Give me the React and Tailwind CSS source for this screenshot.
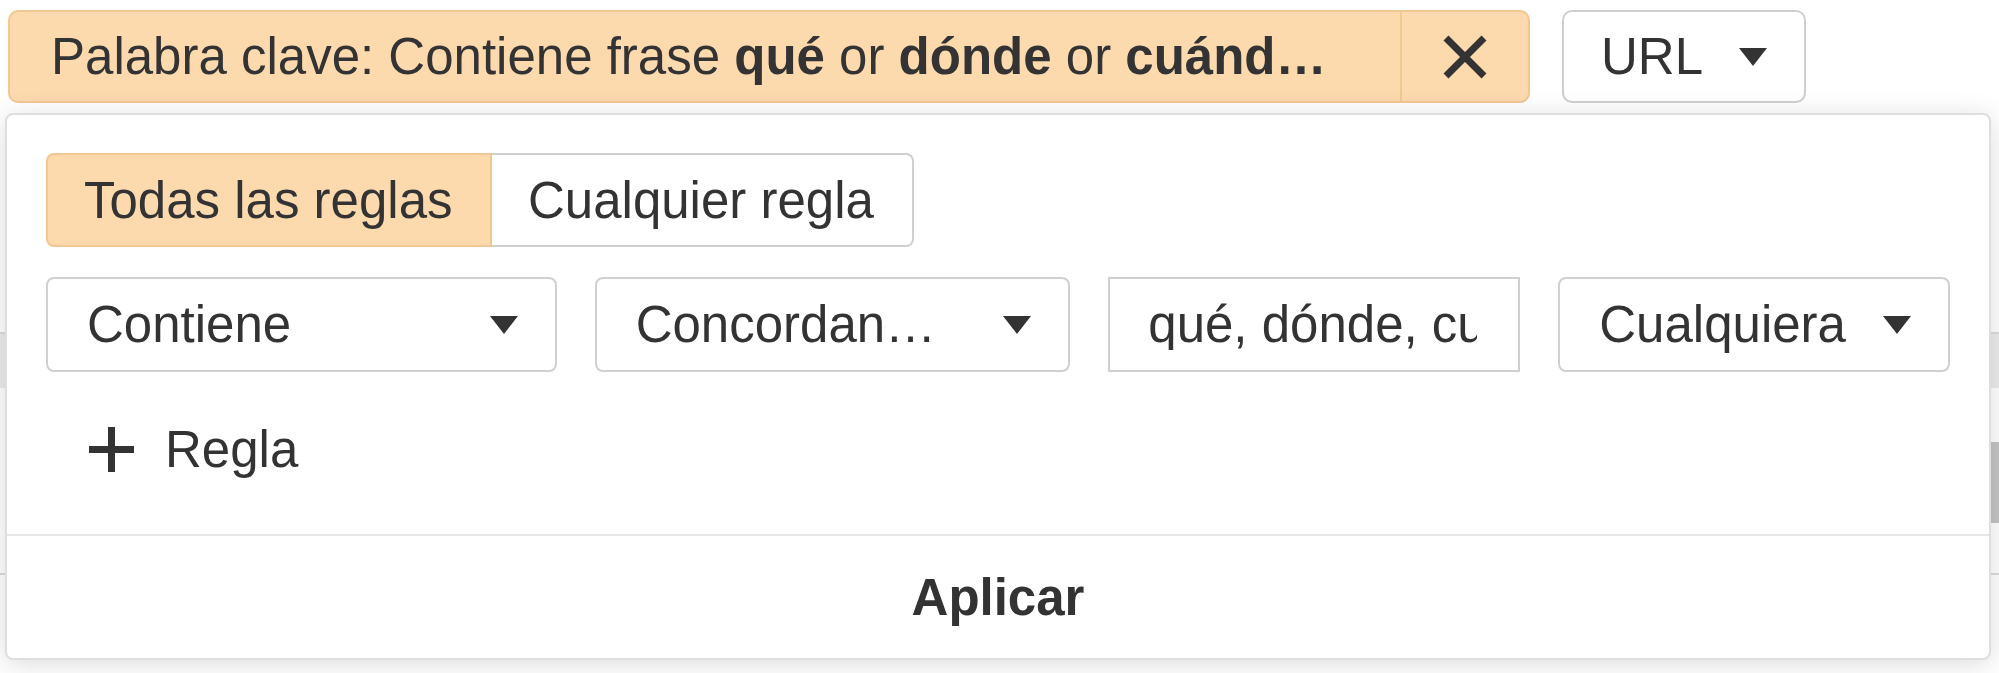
const Caret = () => (
  <svg width="28" height="18" viewBox="0 0 28 18" className="shrink-0">
    <path d="M0 0H28L14 18Z" fill="#333333" />
  </svg>
);

const Select = ({ label, w }) => (
  <div className={`flex h-[95px] items-center justify-between rounded-[8px] border-2 border-[#d0d0d0] bg-white pl-[39px] pr-[37px] ${w}`}>
    <span className="whitespace-nowrap">{label}</span>
    <Caret />
  </div>
);

export default function App() {
  return (
    <div className="relative h-[673px] w-[1999px] overflow-hidden bg-white font-['Liberation_Sans',Arial,sans-serif] text-[51px] leading-none text-[#333333]">
      {/* top bar */}
      <div className="flex items-center gap-[32px] pl-[8px] pt-[10px]">
        <div className="flex h-[93px] w-[1522px] rounded-[10px] border-2 border-[#f2c794] bg-[#fdd9ae]">
          <div className="flex flex-1 items-center whitespace-nowrap pl-[41px]">
            <span>
              Palabra clave: Contiene frase <b className="font-bold">qué</b> or{" "}
              <b className="font-bold">dónde</b> or <b className="font-bold">cuánd…</b>
            </span>
          </div>
          <div className="flex w-[128px] items-center justify-center border-l-2 border-[#f0c893]">
            <svg width="46" height="44" viewBox="0 0 46 44">
              <path d="M4 3L42 41M42 3L4 41" stroke="#333333" strokeWidth="7" />
            </svg>
          </div>
        </div>
        <div className="flex h-[93px] w-[244px] items-center justify-between rounded-[10px] border-2 border-[#cfcfcf] bg-white pl-[37px] pr-[37px]">
          <span>URL</span>
          <Caret />
        </div>
      </div>

      {/* page content behind the popover */}
      <div className="mt-[229px]">
        <div className="h-[56px] border-t-2 border-[#dcdcdc] bg-[#ebebeb]" />
        <div className="flex h-[185px] justify-end pt-[54px]">
          <div className="h-[81px] w-[14px] bg-[#c4c4c4]" />
        </div>
        <div className="h-[40px] border-t-2 border-[#dcdcdc]" />
      </div>

      {/* popover */}
      <div className="absolute left-[5px] top-[113px] flex h-[547px] w-[1986px] flex-col rounded-[8px] border-2 border-[#dedede] bg-white shadow-[0_4px_28px_rgba(0,0,0,0.14)]">
        <div className="flex h-[419px] flex-col px-[39px] pt-[38px]">
          <div className="flex h-[94px]">
            <div className="flex w-[446px] items-center rounded-l-[8px] border-2 border-[#f2c794] bg-[#fdd9ae] pl-[36px]">
              Todas las reglas
            </div>
            <div className="flex w-[422px] items-center rounded-r-[8px] border-2 border-l-0 border-[#cfcfcf] bg-white pl-[36px]">
              Cualquier regla
            </div>
          </div>

          <div className="mt-[30px] flex gap-[38px]">
            <Select label="Contiene" w="w-[511px]" />
            <Select label="Concordan…" w="w-[476px]" />
            <div className="flex h-[95px] w-[412px] items-center border-2 border-[#cfcfcf] bg-white pl-[38px] pr-[41px]">
              <div className="overflow-hidden whitespace-nowrap">qué, dónde, cuándo</div>
            </div>
            <Select label="Cualquiera" w="w-[392px]" />
          </div>

          <div className="mt-[30px] flex h-[94px] items-center gap-[31px] pl-[43px]">
            <svg width="45" height="45" viewBox="0 0 45 45" className="shrink-0">
              <rect x="0" y="19" width="45" height="7" fill="#333333" />
              <rect x="19" y="0" width="7" height="45" fill="#333333" />
            </svg>
            <span>Regla</span>
          </div>
        </div>
        <div className="flex flex-1 items-center justify-center border-t-2 border-[#e6e6e6] font-bold">
          Aplicar
        </div>
      </div>
    </div>
  );
}
